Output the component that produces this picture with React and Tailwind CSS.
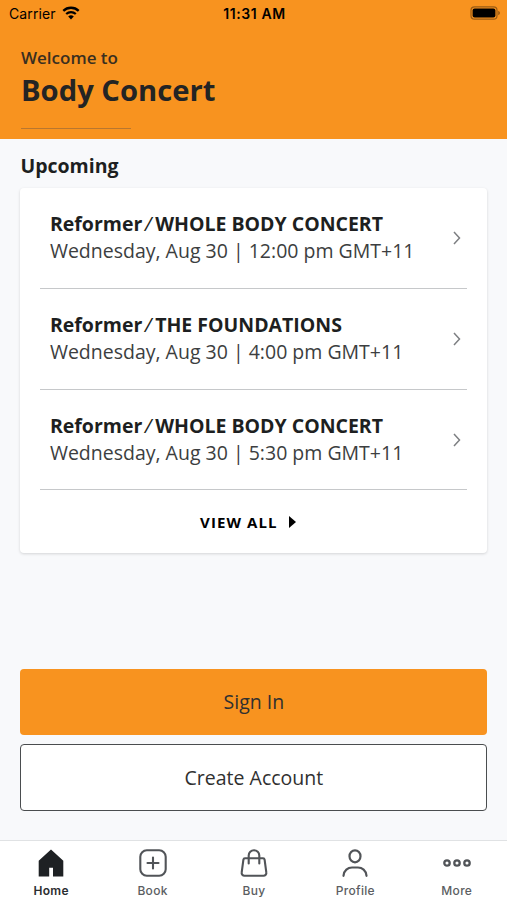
import clsx from "clsx";

const classes = [
  {
    id: 1,
    type: "Reformer",
    name: "WHOLE BODY CONCERT",
    time: "Wednesday, Aug 30 | 12:00 pm GMT+11",
  },
  {
    id: 2,
    type: "Reformer",
    name: "THE FOUNDATIONS",
    time: "Wednesday, Aug 30 | 4:00 pm GMT+11",
  },
  {
    id: 3,
    type: "Reformer",
    name: "WHOLE BODY CONCERT",
    time: "Wednesday, Aug 30 | 5:30 pm GMT+11",
  },
];

const HomeIcon = () => (
  <svg viewBox="0 0 28 28" className="w-7 h-7" fill="#1e2124">
    <path d="M14 .5 26.300 11.800V27.500H16V18.800h-3.800V27.500H1.700V11.800Z" />
  </svg>
);

const BookIcon = () => (
  <svg viewBox="0 0 28 28" className="w-7 h-7" fill="none" stroke="#515458" strokeWidth="2.100" strokeLinecap="round">
    <rect x="1.300" y="1.300" width="25.400" height="25.400" rx="6.500" />
    <path d="M14 8.500v11M8.500 14h11" />
  </svg>
);

const BuyIcon = () => (
  <svg viewBox="0 0 28 28" className="w-7 h-7" fill="none" stroke="#515458" strokeWidth="2.100" strokeLinecap="round" strokeLinejoin="round">
    <path d="M5 9.200h18a1.600 1.600 0 0 1 1.600 1.400l1.700 12.800a2.800 2.800 0 0 1-2.800 3.300h-19a2.800 2.800 0 0 1-2.800-3.300l1.700-12.800A1.600 1.600 0 0 1 5 9.200Z" />
    <path d="M8.700 14.500V6.500a5.300 5.300 0 0 1 10.600 0v8" />
  </svg>
);

const ProfileIcon = () => (
  <svg viewBox="0 0 28 28" className="w-7 h-7" fill="none" stroke="#515458" strokeWidth="2.200" strokeLinecap="round">
    <ellipse cx="14" cy="7.300" rx="5.500" ry="6" />
    <path d="M2.500 26.800c.3-5.500 4.500-8.300 8.500-8.300h6c4 0 8.200 2.800 8.500 8.300" />
  </svg>
);

const MoreIcon = () => (
  <svg viewBox="0 0 28 28" className="w-7 h-7" fill="none" stroke="#515458" strokeWidth="2.300">
    <circle cx="4" cy="14" r="2.700" />
    <circle cx="14" cy="14" r="2.700" />
    <circle cx="24" cy="14" r="2.700" />
  </svg>
);

const tabs = [
  { label: "Home", Icon: HomeIcon },
  { label: "Book", Icon: BookIcon },
  { label: "Buy", Icon: BuyIcon },
  { label: "Profile", Icon: ProfileIcon },
  { label: "More", Icon: MoreIcon },
];

const StatusBar = () => (
  <div className="grid grid-cols-3 items-center h-7 pl-[9px] pr-[7px] text-black font-['Inter',sans-serif] text-sm">
    <div className="flex items-center gap-1.5">
      <span className="tracking-[0.1px]">Carrier</span>
      <svg viewBox="0 0 18 14" className="w-[18px] h-3.5 -mt-0.5">
        <path d="M1.300 4.900a11 11 0 0 1 15.400 0" fill="none" stroke="#000" strokeWidth="2.300" />
        <path d="M4.200 8a7 7 0 0 1 9.600 0" fill="none" stroke="#000" strokeWidth="2.200" />
        <path d="M9 13.500 6.200 10.500a4 4 0 0 1 5.600 0Z" />
      </svg>
    </div>
    <span className="text-center font-semibold tracking-[0.6px] whitespace-nowrap">11:31 AM</span>
    <svg viewBox="0 0 30 14" className="w-[30px] h-3.5 justify-self-end -mt-0.5">
      <rect x="1" y=".8" width="26" height="12.400" rx="3.500" fill="none" stroke="#000" strokeOpacity=".38" strokeWidth="1.200" />
      <rect x="2.600" y="2.500" width="22.800" height="9" rx="2" />
      <path d="M28.300 4.800c2 .8 2 3.600 0 4.400Z" fillOpacity=".45" />
    </svg>
  </div>
);

const ClassRow = ({ item }) => (
  <div className="h-[100.700px] flex items-center justify-between pl-[9.500px] pr-[5px] border-b border-[#c6c8ca]">
    <div className="whitespace-nowrap leading-[27px] pb-[1.500px]">
      <p className="text-[19.500px] font-bold text-[#1d1f21]">
        {item.type}
        <span className="font-medium italic ml-[2.500px] mr-[3.500px]">/</span>
        {item.name}
      </p>
      <p className="text-[19.500px] text-[#3c3e40]">{item.time}</p>
    </div>
    <svg viewBox="0 0 10 16" className="w-2.5 h-4" fill="none" stroke="#7d7f82" strokeWidth="1.500">
      <path d="m2 2 5.500 6L2 14" />
    </svg>
  </div>
);

const App = () => {
  return (
    <div className="w-[507px] h-[900px] flex flex-col overflow-hidden bg-[#f8f9fb] font-['Open_Sans',sans-serif]">
      {/* Header */}
      <header className="h-[139px] shrink-0 bg-[#f8931f]">
        <StatusBar />
        <div className="px-[21px] pt-[18px] text-[#242424]">
          <p className="text-[17px] leading-6 font-semibold text-[#3a2f20]">Welcome to</p>
          <h1 className="text-[29.200px] leading-[40px] font-bold">Body Concert</h1>
          <div className="mt-[18px] w-[110px] border-t border-[#b9772f]" />
        </div>
      </header>

      {/* Upcoming classes */}
      <main className="flex-1 px-[20.400px] pt-[13px] flex flex-col">
        <h2 className="text-[19.500px] leading-7 font-bold text-[#1d1f21]">Upcoming</h2>
        <section className="mt-[8.300px] h-[365px] w-[467px] px-5 rounded bg-white shadow-[0_1px_3px_rgba(0,0,0,0.15)]">
          {classes.map((item) => (
            <ClassRow key={item.id} item={item} />
          ))}
          <button className="w-full h-[64px] flex items-center justify-center gap-[11px] pr-3 text-[15px] font-bold tracking-[1.100px] text-black">
            VIEW ALL
            <svg viewBox="0 0 7 12" className="w-[7px] h-3">
              <path d="M0 0 7 6 0 12Z" />
            </svg>
          </button>
        </section>

        <div className="mt-auto mb-[29px] w-[467px] flex flex-col gap-[9px] text-[19.500px] text-[#303030]">
          <button className="h-[66px] rounded bg-[#f8931f]">Sign In</button>
          <button className="h-[67px] pt-px rounded border-[1.500px] border-[#4a4d4f] bg-white">
            Create Account
          </button>
        </div>
      </main>

      {/* Bottom tabs */}
      <nav className="h-[60px] shrink-0 grid grid-cols-5 pt-2 bg-white border-t border-[#e0e2e4] font-['Inter',sans-serif]">
        {tabs.map(({ label, Icon }, i) => (
          <div key={label} className="flex flex-col items-center pl-px">
            <Icon />
            <span
              className={clsx(
                "mt-1.5 text-xs leading-4 tracking-[0.300px]",
                i === 0 ? "font-semibold text-[#2b2e31]" : "font-medium text-[#5b5e62]"
              )}
            >
              {label}
            </span>
          </div>
        ))}
      </nav>
    </div>
  );
};

export default App;
